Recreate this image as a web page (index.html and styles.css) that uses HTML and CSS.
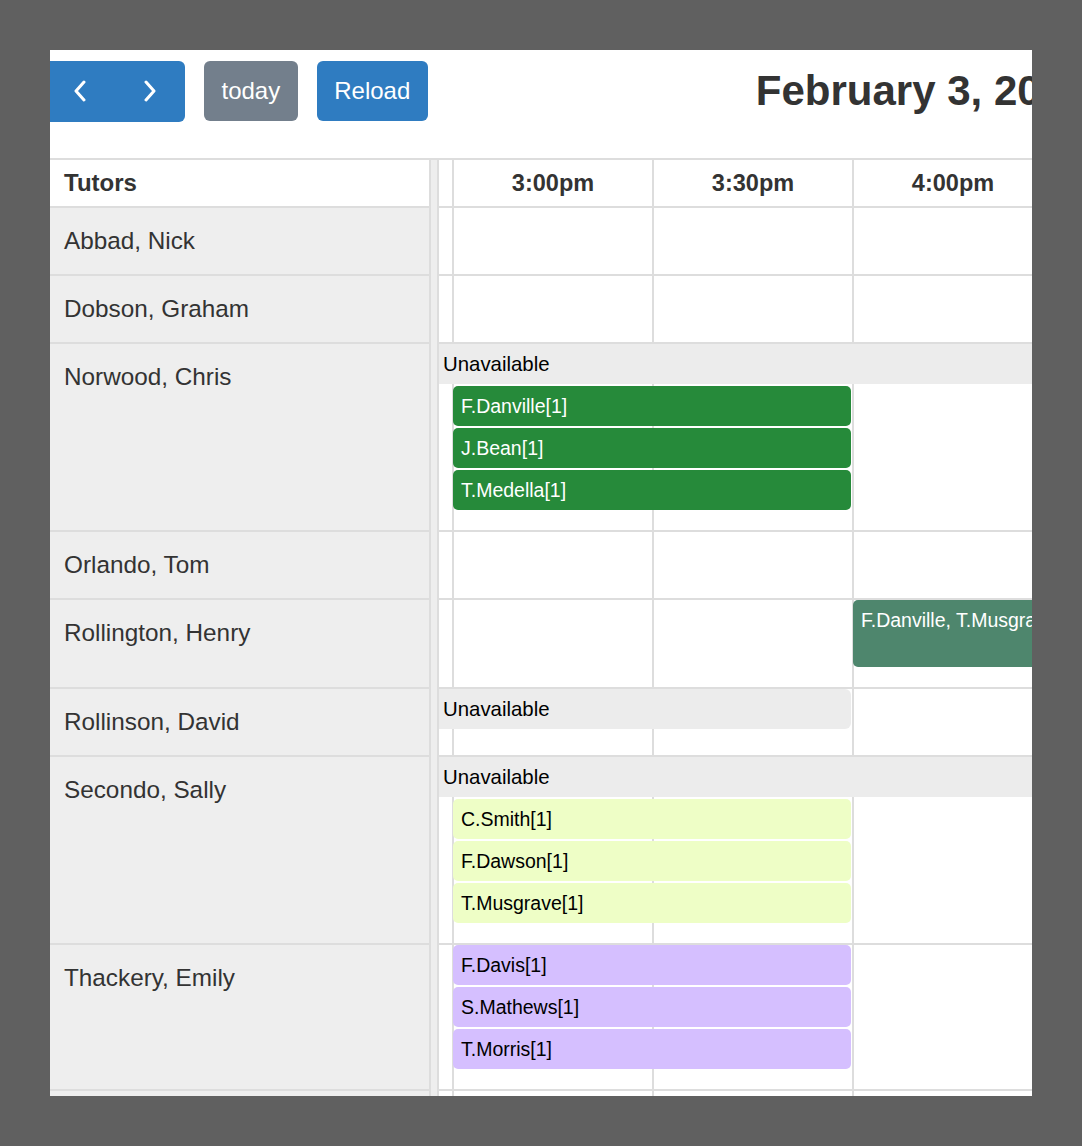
FILE: index.html
```html
<!doctype html>
<html>
    <head>
        <meta charset="utf-8">
        <title>Tutor schedule</title>
        <link rel="stylesheet" href="styles.css">
    </head>
    <body>
        <div class="frame">
            <div class="toolbar">
                <div class="btn-group">
                    <button class="btn btn-primary btn-icon" aria-label="prev">
                        <svg width="14" height="22" viewBox="0 0 14 22"><path d="M11 2 L3 11 L11 20"/></svg>
                    </button>
                    <button class="btn btn-primary btn-icon" aria-label="next">
                        <svg width="14" height="22" viewBox="0 0 14 22"><path d="M3 2 L11 11 L3 20"/></svg>
                    </button>
                </div>
                <button class="btn btn-muted">today</button>
                <button class="btn btn-primary">Reload</button>
                <h2 class="title">February 3, 2020</h2>
            </div>

            <div class="timeline">
                <div class="divider"></div>

                <div class="res res-head">Tutors</div>
                <div class="lane lane-head">
                    <div class="slot">3:00pm</div>
                    <div class="slot">3:30pm</div>
                    <div class="slot">4:00pm</div>
                </div>

                <div class="res">Abbad, Nick</div>
                <div class="lane"></div>

                <div class="res">Dobson, Graham</div>
                <div class="lane"></div>

                <div class="res">Norwood, Chris</div>
                <div class="lane">
                    <div class="unavail">Unavailable</div>
                    <div class="ev ev-green">F.Danville[1]</div>
                    <div class="ev ev-green">J.Bean[1]</div>
                    <div class="ev ev-green">T.Medella[1]</div>
                </div>

                <div class="res">Orlando, Tom</div>
                <div class="lane"></div>

                <div class="res">Rollington, Henry</div>
                <div class="lane">
                    <div class="ev ev-teal ev-tall at-400">F.Danville, T.Musgrave</div>
                </div>

                <div class="res">Rollinson, David</div>
                <div class="lane">
                    <div class="unavail ends-330">Unavailable</div>
                </div>

                <div class="res">Secondo, Sally</div>
                <div class="lane">
                    <div class="unavail">Unavailable</div>
                    <div class="ev ev-lime">C.Smith[1]</div>
                    <div class="ev ev-lime">F.Dawson[1]</div>
                    <div class="ev ev-lime">T.Musgrave[1]</div>
                </div>

                <div class="res">Thackery, Emily</div>
                <div class="lane">
                    <div class="ev ev-purple">F.Davis[1]</div>
                    <div class="ev ev-purple">S.Mathews[1]</div>
                    <div class="ev ev-purple">T.Morris[1]</div>
                </div>

                <div class="res"></div>
                <div class="lane"></div>
            </div>
        </div>
    </body>
</html>
```

FILE: styles.css
```css
* {
    box-sizing: border-box;
    font-family: "Liberation Sans", Arial, Helvetica, sans-serif;
}

body {
    margin: 0;
    padding: 50px;
    background-color: #606060;
}

.frame {
    width: 982px;
    height: 1046px;
    overflow: hidden;
    background-color: #fff;
    color: #333;
}

/* toolbar */

.toolbar {
    display: flex;
    align-items: center;
    gap: 19px;
    height: 60px;
    margin: 11px 0 37px -5px;
}

.toolbar > * {
    flex-shrink: 0;
}

.btn-group {
    display: flex;
    border-radius: 6px;
    overflow: hidden;
}

.btn {
    height: 60px;
    padding: 0 17.5px;
    border: none;
    border-radius: 6px;
    font-size: 24px;
    color: #fff;
    cursor: pointer;
}

.btn-group .btn {
    border-radius: 0;
    height: 61px;
}

.btn-primary {
    background-color: #2f7cc1;
}

.btn-muted {
    background-color: #737f8c;
}

.btn-icon {
    flex-shrink: 0;
    width: 70px;
    padding: 0;
    display: flex;
    align-items: center;
    justify-content: center;
}

.btn-icon svg path {
    fill: none;
    stroke: #fff;
    stroke-width: 3;
    stroke-linecap: round;
    stroke-linejoin: round;
}

.title {
    margin: 0 0 0 309px;
    font-size: 42px;
    line-height: 1;
    font-weight: bold;
    white-space: nowrap;
    color: #333;
}

/* timeline grid */

.timeline {
    display: grid;
    grid-template-columns: 379px 10px minmax(0, 1fr);
    border-top: 2px solid #ddd;
}

.divider {
    grid-column: 2;
    grid-row: 1 / span 10;
    border-left: 2px solid #ddd;
    border-right: 2px solid #ddd;
    background-color: #eee;
}

.res {
    grid-column: 1;
    padding: 19px 14px;
    min-height: 68px;
    line-height: 28px;
    font-size: 24.3px;
    background-color: #eee;
    border-bottom: 2px solid #ddd;
}

.res-head {
    display: flex;
    align-items: center;
    min-height: 48px;
    padding: 0 14px;
    font-weight: bold;
    font-size: 24px;
    background-color: #fff;
}

.lane {
    grid-column: 3;
    display: flex;
    flex-direction: column;
    align-items: flex-start;
    min-height: 68px;
    padding-bottom: 20px;
    border-bottom: 2px solid #ddd;
    background-color: #fff;
    background-image: repeating-linear-gradient(to right, #ddd 0, #ddd 2px, transparent 2px, transparent 200px);
    background-position: 13px 0;
}

.lane-head {
    flex-direction: row;
    align-items: center;
    min-height: 48px;
    padding: 0 0 0 15px;
}

.slot {
    flex-shrink: 0;
    width: 200px;
    padding-right: 2px;
    text-align: center;
    font-size: 23.5px;
    font-weight: bold;
    color: #333;
}

/* events */

.unavail {
    width: 100%;
    height: 40px;
    line-height: 40px;
    padding-left: 4px;
    font-size: 20.4px;
    color: #000;
    background-color: #ececec;
    white-space: nowrap;
}

.unavail.ends-330 {
    width: 412px;
    border-radius: 0 6px 6px 0;
}

.ev {
    flex-shrink: 0;
    width: 398px;
    height: 40px;
    margin: 2px 0 0 14px;
    padding: 0 8px;
    line-height: 40px;
    font-size: 19.5px;
    border-radius: 5px;
    white-space: nowrap;
    overflow: hidden;
}

.lane > .ev:first-child {
    margin-top: 0;
}

.ev.at-400 {
    margin-left: 414px;
}

.ev-tall {
    height: 67px;
    padding-top: 8px;
    line-height: 24px;
}

.ev-green {
    background-color: #268a3a;
    color: #fff;
}

.ev-teal {
    background-color: #4e866d;
    color: #fff;
}

.ev-lime {
    background-color: #eefec6;
    color: #000;
}

.ev-purple {
    background-color: #d5bfff;
    color: #000;
}
```
